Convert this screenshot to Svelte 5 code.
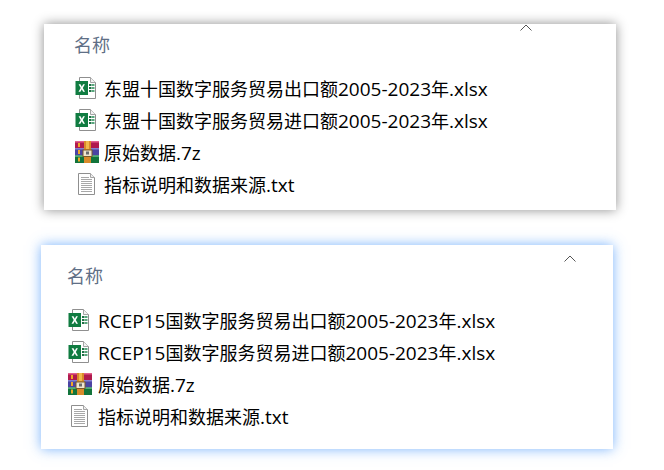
<script>
  const panels = [
    {
      cls: 'first',
      files: [
        { type: 'xlsx', name: '东盟十国数字服务贸易出口额2005-2023年.xlsx' },
        { type: 'xlsx', name: '东盟十国数字服务贸易进口额2005-2023年.xlsx' },
        { type: 'rar', name: '原始数据.7z' },
        { type: 'txt', name: '指标说明和数据来源.txt' }
      ]
    },
    {
      cls: 'second',
      files: [
        { type: 'xlsx', name: 'RCEP15国数字服务贸易出口额2005-2023年.xlsx' },
        { type: 'xlsx', name: 'RCEP15国数字服务贸易进口额2005-2023年.xlsx' },
        { type: 'rar', name: '原始数据.7z' },
        { type: 'txt', name: '指标说明和数据来源.txt' }
      ]
    }
  ];

  // latin runs are set a bit larger than the CJK ones
  const runs = (name) => name.split(/([\x00-\x7f]+)/).filter(Boolean);
  const isLatin = (run) => /^[\x00-\x7f]/.test(run);
</script>

<div class="page">
  {#each panels as panel}
    <section class="panel {panel.cls}">
      <div class="head">
        <span class="title">名称</span>
        <svg class="chevron" width="12" height="7" viewBox="0 0 12 7">
          <path d="M0.5 6.5 L6 1 L11.5 6.5" fill="none" stroke="#555" stroke-width="1" />
        </svg>
      </div>
      <ul>
        {#each panel.files as file}
          <li>
            <span class="icon">
              {#if file.type === 'xlsx'}
                <svg class="doc" width="22" height="22" viewBox="0 0 22 22">
                  <path d="M4.5 0.5 H15.5 L20.5 5.5 V21.5 H4.5 Z" fill="#fff" stroke="#8f8f8f" />
                  <path d="M15.5 0.5 V5.5 H20.5" fill="#f2f2f2" stroke="#a5a5a5" />
                  <rect x="14" y="7" width="2.5" height="2" fill="#1e7145" />
                  <rect x="17" y="7" width="2.5" height="2" fill="#57a77c" />
                  <rect x="14" y="10" width="2.5" height="2" fill="#1e7145" />
                  <rect x="17" y="10" width="2.5" height="2" fill="#57a77c" />
                  <rect x="14" y="13" width="2.5" height="2" fill="#1e7145" />
                  <rect x="17" y="13" width="2.5" height="2" fill="#57a77c" />
                  <rect x="0.5" y="4" width="12.5" height="14" fill="#107c41" />
                  <path d="M3.6 7.2 H5.5 L6.8 9.7 L8.1 7.2 H9.9 L7.8 11 L10 14.8 H8.1 L6.8 12.3 L5.4 14.8 H3.5 L5.7 11 Z" fill="#fff" />
                </svg>
              {:else if file.type === 'rar'}
                <svg class="rar" width="24" height="22" viewBox="0 0 24 22">
                  <rect x="0" y="0" width="24" height="7" fill="#b01a4e" />
                  <rect x="0" y="7" width="24" height="7.5" fill="#4b44a3" />
                  <rect x="0" y="14.5" width="24" height="7.5" fill="#12743b" />
                  <rect x="0" y="0" width="24" height="1.5" fill="#e2608d" />
                  <rect x="0" y="7" width="24" height="1.5" fill="#8480cf" />
                  <rect x="0" y="14.5" width="24" height="1.5" fill="#4fae75" />
                  <rect x="3" y="2" width="2" height="4" fill="#f0a826" />
                  <rect x="3" y="9" width="2" height="4" fill="#f0a826" />
                  <rect x="3" y="16.5" width="2" height="4" fill="#f0a826" />
                  <rect x="9" y="0" width="7" height="22" fill="#d98a2b" />
                  <rect x="11" y="0" width="3" height="8" fill="#f1b94d" />
                  <rect x="8" y="9" width="9" height="6.5" fill="#efe6cf" stroke="#7a5a2a" />
                  <rect x="11" y="10.5" width="3" height="3" fill="#6b6b6b" />
                </svg>
              {:else}
                <svg class="doc" width="22" height="22" viewBox="0 0 22 22">
                  <path d="M3.5 0.5 H15.5 L19.5 4.5 V21.5 H3.5 Z" fill="#fff" stroke="#8f8f8f" />
                  <path d="M15.5 0.5 V4.5 H19.5" fill="#eee" stroke="#a5a5a5" />
                  <path d="M6 4.5 H14 M6 6.5 H17 M6 8.5 H17 M6 10.5 H17 M6 12.5 H17 M6 14.5 H17 M6 16.5 H17 M6 18.5 H17" stroke="#a8a8a8" />
                </svg>
              {/if}
            </span>
            <span class="name">{#each runs(file.name) as run}{#if isLatin(run)}<span class="latin">{run}</span>{:else}{run}{/if}{/each}</span>
          </li>
        {/each}
      </ul>
    </section>
  {/each}
</div>

<style>
  :global(body) {
    margin: 0;
    background: #fff;
  }

  .page {
    width: 664px;
    height: 470px;
    overflow: hidden;
    padding-top: 24px;
    box-sizing: border-box;
    font-family: "Open Sans", "Noto Sans CJK SC", sans-serif;
  }

  .panel {
    width: 572px;
    box-sizing: border-box;
    background: #fff;
  }

  .first {
    height: 186px;
    margin-left: 44px;
    padding: 7px 0 0 30px;
    box-shadow: 0 0 11px rgba(0, 0, 0, 0.45);
  }

  .second {
    height: 204px;
    margin: 35px 0 0 41px;
    padding: 17px 0 0 26px;
    box-shadow: 0 0 12px rgba(70, 150, 250, 0.72);
  }

  .head {
    position: relative;
    height: 26px;
    display: flex;
    align-items: center;
  }

  .title {
    font-size: 18px;
    color: #5f6f86;
  }

  .chevron {
    position: absolute;
    top: -7px;
    left: 446px;
  }

  .second .chevron {
    top: -7px;
    left: 497px;
  }

  ul {
    list-style: none;
    margin: 15px 0 0;
    padding: 0;
  }

  .second ul {
    margin-top: 16px;
  }

  li {
    display: flex;
    align-items: center;
    height: 32px;
  }

  .icon {
    width: 30px;
    display: flex;
    align-items: center;
  }

  .second .icon {
    width: 31px;
  }

  .doc,
  .rar {
    margin-left: 1px;
  }

  .name {
    font-size: 18px;
    color: #000;
    white-space: nowrap;
  }

  .latin {
    font-size: 19px;
  }
</style>
